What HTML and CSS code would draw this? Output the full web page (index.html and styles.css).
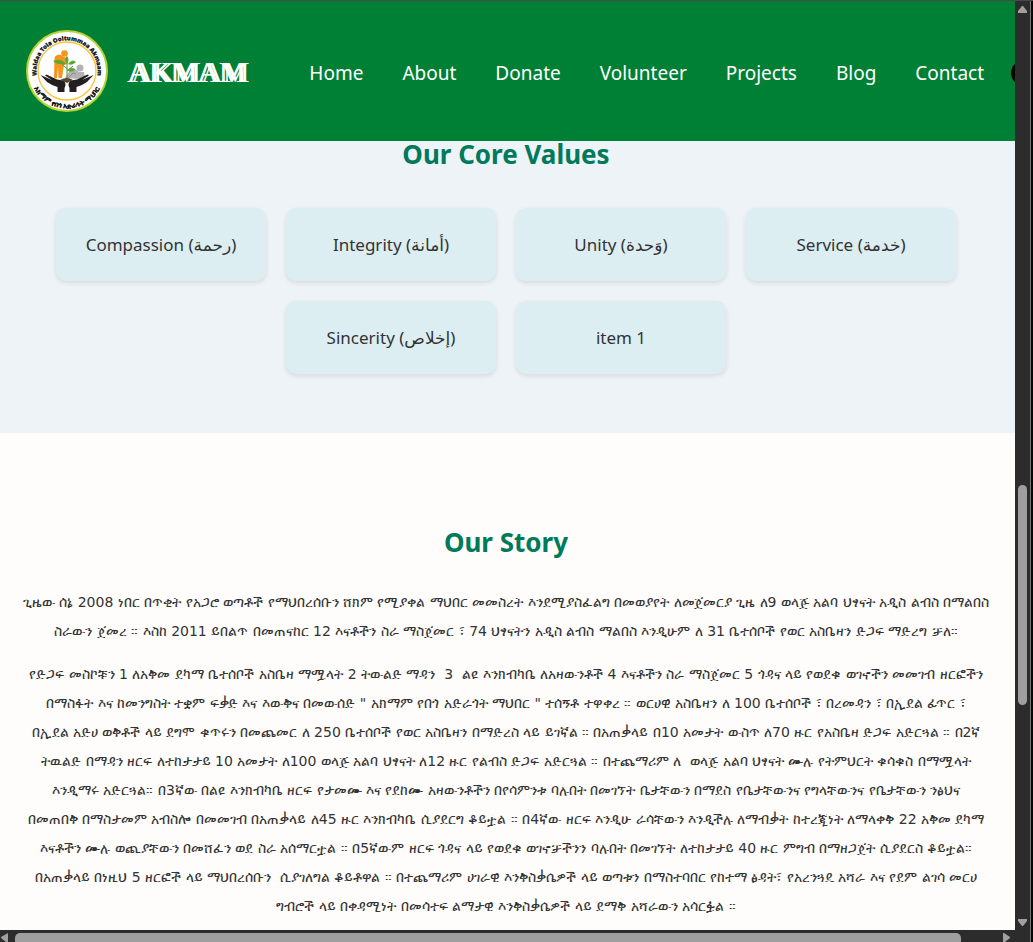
FILE: index.html
```html
<!DOCTYPE html>
<html lang="am">
<head>
<meta charset="utf-8">
<meta name="viewport" content="width=device-width, initial-scale=1">
<title>AKMAM</title>
<link rel="stylesheet" href="styles.css">
</head>
<body>
<div class="window">
  <div class="page">
    <header class="site-header">
      <a class="brand" href="#">
        <svg class="logo" viewBox="0 0 82 82" role="img" aria-label="Waldaa Tola Ooltummaa Akmaam">
          <defs>
            <path id="arc-top" d="M14 55A30.500 30.500 0 1 1 68 55"/>
            <path id="arc-bottom" d="M5 36A36.500 36.500 0 1 0 77 36"/>
          </defs>
          <circle cx="41" cy="41" r="40" fill="#fff" stroke="#b5d334" stroke-width="2"/>
          <circle cx="41" cy="41" r="29" fill="none" stroke="#fdc33c" stroke-width="1.400"/>
          <text class="seal-text"><textPath href="#arc-top" startOffset="50%" text-anchor="middle">Waldaa Tola Ooltummaa Akmaam</textPath></text>
          <text class="seal-text seal-text-am"><textPath href="#arc-bottom" startOffset="50%" text-anchor="middle">አክማም የበጎ አድራጎት ማህበር</textPath></text>
          <g fill="#b3b3b3">
            <circle cx="54" cy="38" r="3.500"/>
            <path d="M39 48L44 40L48 38L53 42L58 42L59 47L53 49Z"/>
          </g>
          <path d="M41 49L47 43L50 44" fill="none" stroke="#8d8d8d" stroke-width="1"/>
          <g fill="#f7941d">
            <circle cx="38.500" cy="23.500" r="3.300"/>
            <path d="M28.500 28Q29.500 24.500 34 24.500L39 27.500L41 34L38 35L36 48H32.500L32 37L31 48H28Z"/>
          </g>
          <path d="M41 50V31M41 39L35 33M41 41L47 36" fill="none" stroke="#4a9a2b" stroke-width="1"/>
          <g fill="#5aa832">
            <path d="M41 34Q37 28 41 26Q44 30 41 34Z"/>
            <path d="M40 34Q31 35 27 31Q35 28 40 34Z"/>
            <path d="M42 34Q46 28 50 32Q46 36 42 34Z"/>
            <path d="M41 40Q47 36 49 40Q45 43 41 40Z"/>
          </g>
          <g fill="#231f20">
            <path d="M14.500 45L26 50L19 45.500L20.500 44.500L31 49.500L37.500 50.500Q41 54 38.500 58V62H31.500V57Q25 55 21 52Z"/>
            <path d="M67.500 45L56 50L63 45.500L61.500 44.500L51 49.500L44.500 50.500Q41 54 43.500 58V62H50.500V57Q57 55 61 52Z"/>
            <path d="M34 50Q41 46 47 50L41 53Z" fill="#5a4335"/>
          </g>
        </svg>
        <span class="brand-name">AKMAM</span>
      </a>
      <nav class="site-nav">
        <a href="#">Home</a>
        <a href="#">About</a>
        <a href="#">Donate</a>
        <a href="#">Volunteer</a>
        <a href="#">Projects</a>
        <a href="#">Blog</a>
        <a href="#">Contact</a>
        <button class="theme-toggle" type="button" aria-label="Toggle theme"></button>
      </nav>
    </header>
    <main>
      <section class="values">
        <h2>Our Core Values</h2>
        <ul class="value-list">
          <li>Compassion (رحمة)</li>
          <li>Integrity (أمانة)</li>
          <li>Unity (وَحدة)</li>
          <li>Service (خدمة)</li>
          <li>Sincerity (إخلاص)</li>
          <li>item 1</li>
        </ul>
      </section>
      <section class="story">
        <h2>Our Story</h2>
        <p>ጊዜው ሰኔ 2008 ነበር በጥቂት የአጋሮ ወጣቶች የማህበረሰቡን ሸክም የሚያቀል ማህበር መመስረት እንደሚያስፈልግ በመወያየት ለመጀመርያ ጊዜ ለ9 ወላጅ አልባ ህፃናት አዲስ ልብስ በማልበስ<br>ስራውን ጀመረ ። እስከ 2011 ይበልጥ በመጠናከር 12 እናቶችን ስራ ማስጀመር ፣ 74 ህፃናትን አዲስ ልብስ ማልበስ እንዲሁም ለ 31 ቤተሰቦች የወር አስቤዛን ድጋፍ ማድረግ ቻለ።</p>
        <p>የድጋፍ መስኮቹን 1 ለአቅመ ደካማ ቤተሰቦች አስቤዛ ማሟላት 2 ትውልድ ማዳን  3  ልዩ እንክብካቤ ለአዛውንቶች 4 እናቶችን ስራ ማስጀመር 5 ጎዳና ላይ የወደቁ ወገኖችን መመገብ ዘርፎችን<br>በማስፋት እና ከመንግስት ተቋም ፍቃድ እና እውቅና በመውሰድ " አክማም የበጎ አድራጎት ማህበር " ተሰኝቶ ተዋቀረ ። ወርሀዊ አስቤዛን ለ 100 ቤተሰቦች ፣ በረመዳን ፣ በኢደል ፊጥር ፣<br>በኢደል አድሀ ወቅቶች ላይ ደግሞ ቁጥሩን በመጨመር ለ 250 ቤተሰቦች የወር አስቤዛን በማድረስ ላይ ይገኛል ። በአጠቃላይ በ10 አመታት ውስጥ ለ70 ዙር የአስቤዛ ድጋፍ አድርጓል ። በ2ኛ<br>ትዉልድ በማዳን ዘርፍ ለተከታታይ 10 አመታት ለ100 ወላጅ አልባ ህፃናት ለ12 ዙር የልብስ ድጋፍ አድርጓል ። በተጨማሪም ለ  ወላጅ አልባ ህፃናት ሙሉ የትምህርት ቁሳቁስ በማሟላት<br>እንዲማሩ አድርጓል። በ3ኛው በልዩ እንክብካቤ ዘርፍ የታመሙ እና የደከሙ አዛውንቶችን በየሳምንቱ ባሉበት በመገኘት ቤታቸውን በማደስ የቤታቸውንና የግላቸውንና የቤታቸውን ንፅህና<br>በመጠበቅ በማስታመም አብስሎ በመመገብ በአጠቃላይ ለ45 ዙር እንክብካቤ ሲያደርግ ቆይቷል ። በ4ኛው ዘርፍ እንዲሁ ራሳቸውን እንዲችሉ ለማብቃት ከተረጂነት ለማላቀቅ 22 አቅመ ደካማ<br>እናቶችን ሙሉ ወጪያቸውን በመሸፈን ወደ ስራ አሰማርቷል ። በ5ኛውም ዘርፍ ጎዳና ላይ የወደቁ ወገኖቻችንን ባሉበት በመገኘት ለተከታታይ 40 ዙር ምግብ በማዘጋጀት ሲያደርስ ቆይቷል።<br>በአጠቃላይ በነዚህ 5 ዘርፎች ላይ ማህበረሰቡን  ሲያገለግል ቆይቶዋል ። በተጨማሪም ሀገራዊ እንቅስቃሴዎች ላይ ወጣቱን በማስተባበር የከተማ ፅዳት፣ የአረንጓዴ አሻራ እና የደም ልገሳ መርሀ<br>ግብሮች ላይ በቀዳሚነት በመሳተፍ ልማታዊ እንቅስቃሴዎች ላይ ደማቅ አሻራውን አሳርፏል ።</p>
      </section>
    </main>
  </div>
  <div class="scroll-y" aria-hidden="true">
    <svg class="arrow" viewBox="0 0 15 14"><path d="M7 5H8L12 10V12H3V10Z"/></svg>
    <div class="track"><div class="thumb"></div></div>
    <svg class="arrow" viewBox="0 0 15 14"><path d="M3 3H12V5L8 10H7L3 5Z"/></svg>
  </div>
  <div class="scroll-x" aria-hidden="true">
    <svg class="arrow" viewBox="0 0 15 12"><path d="M8 3V12H6L1 8V7Z"/></svg>
    <div class="track"><div class="thumb"></div></div>
    <svg class="arrow arrow-right" viewBox="0 0 15 12"><path d="M3 3H4L10 7V8L5 12H3Z"/></svg>
  </div>
  <div class="edge"></div>
</div>
</body>
</html>
```
FILE: styles.css
```css
* {
  box-sizing: border-box;
}

body {
  margin: 0;
  background: #fffdfb;
  color: #333;
  font-family: "Noto Sans", "DejaVu Sans", sans-serif;
}

.window {
  display: grid;
  grid-template-columns: minmax(0, 1fr) 15px 3px;
  grid-template-rows: minmax(0, 1fr) 12px;
  height: 100vh;
  overflow: hidden;
  border-top: 1px solid #484848;
}

.page {
  overflow: hidden;
}

.site-header {
  position: relative;
  z-index: 1;
  display: flex;
  align-items: center;
  gap: 60px;
  height: 140px;
  padding-left: 26px;
  background: #008035;
}

.brand {
  display: flex;
  align-items: center;
  gap: 19px;
  color: #fff;
  text-decoration: none;
}

.logo {
  width: 82px;
  height: 82px;
  flex: none;
}

.seal-text {
  font: 900 6px "Noto Sans", sans-serif;
  fill: #111;
  stroke: #111;
  stroke-width: 0.2px;
}

.seal-text-am {
  font-size: 7px;
}

.brand-name {
  padding: 2px 4px 0 0;
  font: 30px "Liberation Serif", serif;
  text-shadow: 1px 0 #fff, 4px 0 #fff;
}

.site-nav {
  display: flex;
  align-items: center;
  gap: 39px;
  padding-top: 3px;
  font-size: 19px;
}

.site-nav a {
  color: #fff;
  text-decoration: none;
}

.theme-toggle {
  width: 24px;
  height: 24px;
  flex: none;
  margin-left: -12px;
  padding: 0;
  border: 0;
  border-radius: 50%;
  background: #000;
}

h2 {
  margin: 0;
  color: #007a5a;
  font-size: 26px;
  line-height: 40px;
  text-align: center;
}

.values {
  padding: 0 23px 59px 20px;
  background: #eef3f8;
}

.values h2 {
  margin-top: -7px;
}

.value-list {
  display: flex;
  flex-wrap: wrap;
  justify-content: center;
  gap: 20px;
  max-width: 900px;
  margin: 0 auto;
  padding: 34px 0 0;
  list-style: none;
}

.value-list li {
  width: calc((100% - 60px) / 4);
  padding: 22px 10px;
  border-radius: 10px;
  background: #dceef2;
  box-shadow: 0 2px 5px rgba(0, 0, 0, 0.1);
  font-size: 17px;
  line-height: 29px;
  text-align: center;
}

.story {
  padding: 89px 23px 20px 20px;
}

.story h2 {
  margin-bottom: 26px;
}

.story p {
  margin: 0 0 14px;
  font-family: "DejaVu Sans", sans-serif;
  font-size: 14px;
  line-height: 29px;
  text-align: center;
  white-space: pre;
}

.scroll-y,
.scroll-x {
  display: flex;
  background: #2c2c2c;
}

.scroll-y {
  flex-direction: column;
}

.scroll-x {
  grid-row: 2;
  grid-column: 1 / 3;
}

.arrow {
  flex: none;
  width: 15px;
  fill: #a0a0a0;
}

.arrow-right {
  margin-right: 15px;
}

.scroll-y .arrow {
  height: 14px;
}

.scroll-x .arrow {
  height: 12px;
}

.track {
  display: flex;
  flex: 1;
}

.thumb {
  border-radius: 5px;
  background: #9f9f9f;
}

.scroll-y .track {
  align-items: flex-end;
  justify-content: center;
  padding-bottom: 211px;
}

.scroll-y .thumb {
  width: 9px;
  height: 220px;
}

.scroll-x .track {
  padding-top: 3px;
}

.scroll-x .thumb {
  width: 96%;
  border-radius: 5px 5px 0 0;
}

.edge {
  grid-row: 1 / 3;
  grid-column: 3;
  border-left: 1px solid #777;
  background: #050505;
}
```
